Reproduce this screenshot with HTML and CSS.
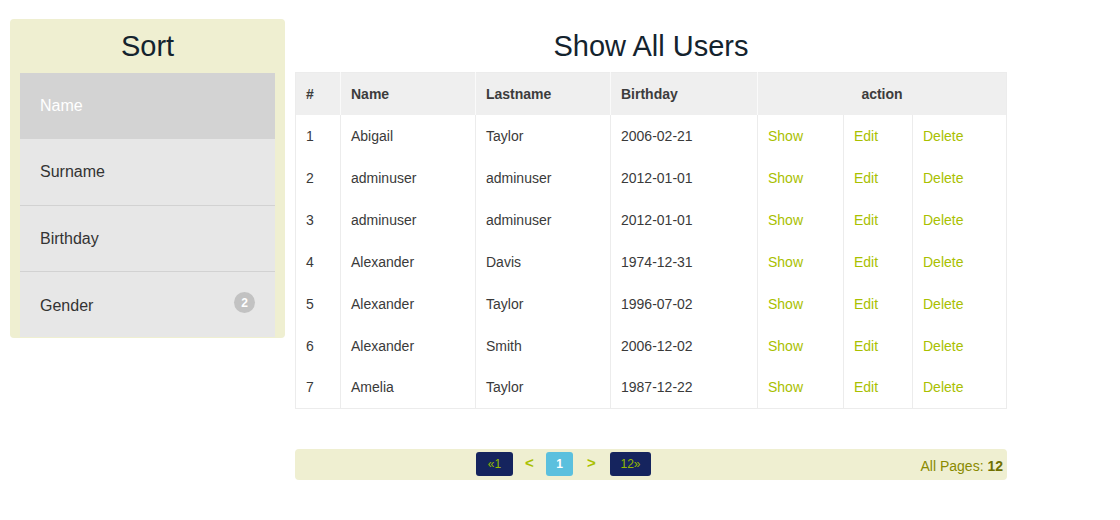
FILE: index.html
```html
<!DOCTYPE html>
<html>
<head>
<meta charset="utf-8">
<link rel="stylesheet" href="styles.css">
</head>
<body>
<div class="page">
  <aside class="sidebar">
    <h2 class="side-title">Sort</h2>
    <ul class="sort-list">
      <li class="sort-item active">Name</li>
      <li class="sort-item">Surname</li>
      <li class="sort-item">Birthday</li>
      <li class="sort-item last">Gender <span class="badge">2</span></li>
    </ul>
  </aside>
  <main class="main">
    <h1 class="main-title">Show All Users</h1>
    <table class="users">
      <thead>
        <tr>
          <th class="c-num">#</th>
          <th class="c-name">Name</th>
          <th class="c-last">Lastname</th>
          <th class="c-birth">Birthday</th>
          <th class="c-action" colspan="3">action</th>
        </tr>
      </thead>
      <tbody>
        <tr><td>1</td><td>Abigail</td><td>Taylor</td><td>2006-02-21</td><td class="c-show"><a>Show</a></td><td class="c-edit"><a>Edit</a></td><td><a>Delete</a></td></tr>
        <tr><td>2</td><td>adminuser</td><td>adminuser</td><td>2012-01-01</td><td><a>Show</a></td><td><a>Edit</a></td><td><a>Delete</a></td></tr>
        <tr><td>3</td><td>adminuser</td><td>adminuser</td><td>2012-01-01</td><td><a>Show</a></td><td><a>Edit</a></td><td><a>Delete</a></td></tr>
        <tr><td>4</td><td>Alexander</td><td>Davis</td><td>1974-12-31</td><td><a>Show</a></td><td><a>Edit</a></td><td><a>Delete</a></td></tr>
        <tr><td>5</td><td>Alexander</td><td>Taylor</td><td>1996-07-02</td><td><a>Show</a></td><td><a>Edit</a></td><td><a>Delete</a></td></tr>
        <tr><td>6</td><td>Alexander</td><td>Smith</td><td>2006-12-02</td><td><a>Show</a></td><td><a>Edit</a></td><td><a>Delete</a></td></tr>
        <tr><td>7</td><td>Amelia</td><td>Taylor</td><td>1987-12-22</td><td><a>Show</a></td><td><a>Edit</a></td><td><a>Delete</a></td></tr>
      </tbody>
    </table>
    <div class="pager">
      <div class="pages">
        <span class="pg pg-dark">«1</span>
        <span class="pg-arrow">&lt;</span>
        <span class="pg pg-active">1</span>
        <span class="pg-arrow">&gt;</span>
        <span class="pg pg-dark pg-wide">12»</span>
      </div>
      <div class="total">All Pages: <b>12</b></div>
    </div>
  </main>
</div>
</body>
</html>
```

FILE: styles.css
```css
* { box-sizing: border-box; }
body {
  margin: 0;
  font-family: "Liberation Sans", Arial, sans-serif;
  color: #333;
  background: #fff;
}
.page {
  display: flex;
  align-items: flex-start;
  gap: 10px;
  padding: 19px 0 0 10px;
}
.sidebar {
  width: 275px;
  height: 319px;
  background: #efefd1;
  border-radius: 4px;
  padding: 0 10px;
  overflow: hidden;
}
.side-title, .main-title {
  margin: 0;
  height: 54px;
  line-height: 54px;
  font-size: 29px;
  font-weight: normal;
  color: #14232e;
  text-align: center;
}
.main-title { height: 53px; }
.sort-list {
  list-style: none;
  margin: 0;
  padding: 0;
}
.sort-item {
  height: 66px;
  display: flex;
  align-items: center;
  justify-content: space-between;
  padding: 0 20px;
  font-size: 16px;
  color: #333;
  background: #e7e7e7;
  border-top: 1px solid #d2d2d2;
}
.sort-item.last { padding-top: 2px; }
.sort-item.active {
  background: #d3d3d3;
  color: #fff;
  border-top: none;
}
.sort-item.active + .sort-item { border-top: none; }
.badge {
  width: 21px;
  height: 21px;
  border-radius: 50%;
  background: #c2c2c2;
  color: #fff;
  font-size: 12px;
  font-weight: bold;
  display: flex;
  align-items: center;
  justify-content: center;
  margin-top: -6px;
}
.main {
  width: 712px;
}
.users {
  width: 712px;
  border-collapse: collapse;
  font-size: 14px;
  border: 1px solid #ececec;
}
.users th {
  height: 42px;
  background: #efefef;
  text-align: left;
  font-weight: bold;
  color: #3c3c3c;
  padding: 0 10px;
  border-right: 1px solid #fafafa;
}
.users th.c-action { text-align: center; border-right: none; }
.c-num { width: 45px; }
.c-name { width: 135px; }
.c-last { width: 135px; }
.c-birth { width: 147px; }
.c-show { width: 86px; }
.c-edit { width: 69px; }
.users td {
  height: 42px;
  padding: 0 10px;
  color: #3a3a3a;
  border-right: 1px solid #ececec;
}
.users a {
  color: #a9c000;
}
.pager {
  margin-top: 40px;
  height: 31px;
  background: #efefd1;
  border-radius: 4px;
  display: flex;
  align-items: center;
  justify-content: space-between;
  padding: 0 4px 2px 181px;
}
.pages {
  display: flex;
  align-items: center;
}
.pg {
  height: 24px;
  line-height: 24px;
  border-radius: 3px;
  font-size: 12px;
  text-align: center;
}
.pg-dark {
  background: #15245e;
  color: #93b800;
  width: 37px;
}
.pg-wide { width: 41px; }
.pg-active {
  background: #5bc0de;
  color: #fff;
  font-weight: bold;
  width: 27px;
}
.pg-arrow {
  text-align: center;
  color: #a9c000;
  font-weight: bold;
  font-size: 15px;
  margin-top: -2px;
}
.pages .pg-arrow:nth-child(2) { width: 33px; }
.pages .pg-arrow:nth-child(4) { width: 37px; }
.total {
  font-size: 14px;
  color: #8a8a00;
  margin-top: 4px;
}
.total b { color: #707000; }
```
